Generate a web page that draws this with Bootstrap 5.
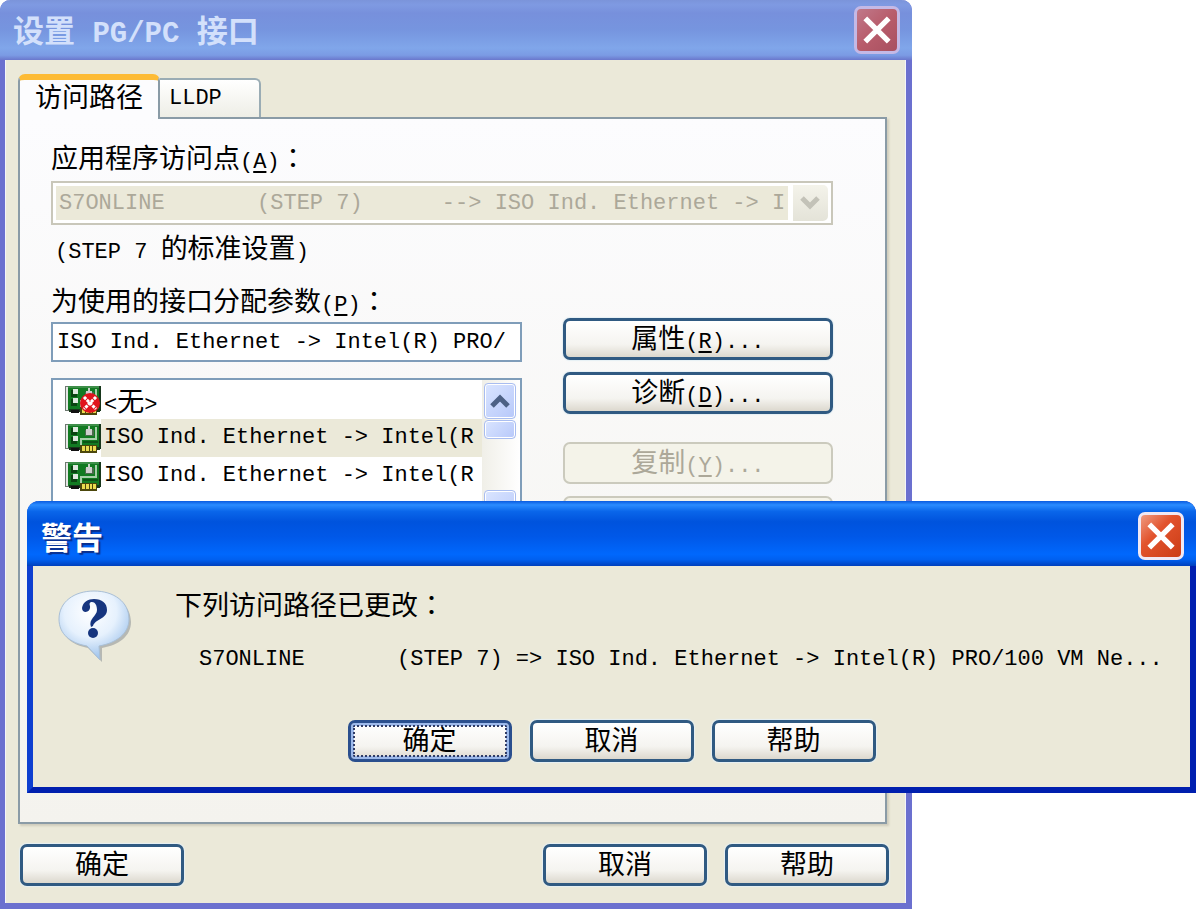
<!DOCTYPE html>
<html lang="zh-CN">
<head>
<meta charset="utf-8">
<meta name="viewport" content="width=device-width, initial-scale=1">
<title>设置 PG/PC 接口</title>
<link href="https://cdn.jsdelivr.net/npm/bootstrap@5.3.0/dist/css/bootstrap.min.css" rel="stylesheet">
<style>
  :root { --face: #ebe9d9; --edge: #8a9ba6; }
  body { background: #fff; color: #000; font: 27px/36px "Noto Sans CJK SC", sans-serif; }
  .mono { font-family: "Liberation Mono", "Noto Sans CJK SC", monospace; font-size: 22px; white-space: pre; }
  span.mono, b.mono { line-height: 1; }
  .mid { font-family: "Noto Sans CJK TC", sans-serif; line-height: 1; }
  u { text-underline-offset: 3px; text-decoration-thickness: 2px; }

  /* windows */
  .settings { width: 76.25%; min-height: 100vh; background: var(--face); border: solid #6b70cf; border-width: 0 6px 6px 5px; border-radius: 10px 10px 0 0; box-shadow: inset 1px 0 #f4f4fa, inset -1px 0 #f4f4fa; }
  .caption { height: 60px; font-size: 31px; font-weight: 700; }
  .caption .mono { font-size: 29px; }
  .caption-idle { margin: 0 -6px 0 -5px; padding: 0 12px 0 13px; color: #d3e0fb; border-radius: 10px 10px 0 0; background: linear-gradient(#7b94da 0, #7f9ae2 8%, #7790dc 22%, #7695df 50%, #80a6ea 80%, #7b9be4 92%, #6a77cc 100%); }
  .caption-live { height: 65px; margin: 0 -6px; padding: 4px 12px 0 14px; color: #fff; text-shadow: 2px 2px 1px #0a2f8c; border-radius: 12px 12px 0 0; background: linear-gradient(#0a5be0 0, #2b8cff 6%, #0a66ea 16%, #0053dd 32%, #0058e8 55%, #0068fd 82%, #0060f0 90%, #0040bc 100%); }
  .alert-window { position: absolute; left: 27px; right: 0; top: 501px; background: var(--face); border: solid #0e3fd0; border-width: 0 6px 6px; border-right-color: #001fb0; border-bottom-color: #001fae; border-radius: 12px 12px 0 0; }
  .btn-close-xp { width: 46px; height: 48px; padding: 0; border: 3px solid #f0e8f4; border-radius: 7px; background: linear-gradient(135deg, #ef9a80, #e2532d 40%, #cb3d16); }
  .btn-close-xp.idle { border-color: #c4b9e6; background: linear-gradient(135deg, #c0798a, #b85c6b 50%, #a85060); }
  .btn-close-xp svg { display: block; margin: auto; }

  /* tabs and sheet */
  .tabs { margin: 14px 13px 0; height: 43px; align-items: flex-end; }
  .tab { border: 2px solid var(--edge); border-bottom: 0; color: #000; padding: 0; text-align: left; }
  .tab-on { width: 142px; height: 45px; margin-bottom: -2px; padding: 0 0 8px 15px; background: #fcfcfe; border-top: 6px solid #fdbb35; border-radius: 7px 7px 0 0; line-height: 31px; z-index: 1; }
  .tab-off { width: 101px; height: 39px; padding-left: 9px; background: linear-gradient(#fff, #eeeee6); border-color: #9aacb4; border-left: 0; border-radius: 0 6px 0 0; }
  .sheet { margin: 0 19px 0 13px; padding: 20px 52px 0 31px; border: 2px solid var(--edge); background: linear-gradient(#fcfcfe, #f4f3ee); box-shadow: 2px 2px 2px #cfccbc; }

  /* controls */
  .field { border: 2px solid #7f9db9; border-radius: 0; background: #fff; color: #000; padding: 0 4px; height: 40px; }
  .combo { height: 44px; margin-top: 6px; border: 2px solid #c9c7ba; background: #fff; padding: 3px; }
  .combo select { appearance: none; width: 100%; height: 100%; border: 0; border-radius: 0; background: var(--face); color: #aca899; opacity: 1; padding: 0 3px; }
  .combo .arrow { width: 40px; flex: none; margin: -1px 0; border-left: 5px solid #fff; background: linear-gradient(#f4f3ea, #e4e3d8); border-radius: 5px; }
  .btn-xp { height: 42px; padding: 0 0 4px; border: 3px solid #305a82; border-radius: 7px; background: linear-gradient(#fff, #f5f4f0 65%, #dcd8ce); color: #000; font-size: 27px; line-height: 32px; box-shadow: 0 0 1px 1px #e6f0f4; }
  .btn-xp:disabled { border: 2px solid #cbcabd; background: #f4f3e9; color: #aca899; opacity: 1; box-shadow: none; }
  .w-btn { width: 164px; }
  .btn-xp.default { border-color: #2a4f8e; box-shadow: inset 0 0 0 3px #9db9ea; position: relative; }
  .btn-xp.default::after { content: ""; position: absolute; inset: 2px; border: 2px dotted #303c66; border-radius: 2px; }
  .btn-row { gap: 18px; }
  .split { gap: 41px; }
  .second-label { padding-top: 17px; }
  .side { width: 270px; gap: 12px; }
  .params { border: 2px solid #7f9db9; background: #fff; height: 172px; overflow: hidden; }
  .params ul { overflow: hidden; min-width: 0; padding: 1px 0 0 12px; }
  .params li { height: 38px; line-height: 38px; }
  .params li span { flex: 1 0 auto; padding-left: 3px; }
  .params li span.mono { line-height: 38px; }
  .params li.picked span { background: var(--face); }
  .scroller { width: 38px; background: linear-gradient(90deg, #f0efe8, #fff); padding: 3px 4px 0 2px; }
  .scroller i { display: block; border: 1px solid #a9bdf0; border-radius: 4px; background: linear-gradient(135deg, #dae5ff, #b7c8fa); box-shadow: inset 0 0 0 1px #fff; }
  .up { height: 36px; } .thumb { height: 19px; margin-top: 1px; } .down { height: 36px; margin-top: 51px; }
  .footer-row { padding: 20px 17px 17px 15px; }
  .notice { padding: 20px 0 0 24px; }
  .notice-text { margin-left: 42px; }
  .notice-buttons { padding: 42px 0 25px; }
</style>
</head>
<body>
<svg width="0" height="0" class="position-absolute">
  <defs>
    <symbol id="nic" viewBox="0 0 36 30">
      <path d="M0 1h5v25H0z" fill="#6d7a70"/><path d="M1 2h2v23H1z" fill="#e6e6e6"/>
      <path d="M3 1h33v24H3z" fill="#127a22"/><path d="M3 1h33v2H3z" fill="#3f8f4a"/>
      <path d="M34 1h2v25h-2zM4 24h31v3H4z" fill="#17361b"/>
      <path d="M6 5h6v7H6zM6 14h6v7H6z" fill="#0b4312"/><path d="M8 4h5v5H8zM8 13h5v5H8z" fill="#dfe8df"/>
      <path d="M20 7h9v6h-9z" fill="#4a6b4d"/><path d="M21 6h6v6h-6z" fill="#cfcfcf"/><path d="M23 3h2v3h-2z" fill="#c8d4c8"/>
      <path d="M16 22v-6h15V4" fill="none" stroke="#a6cfaa" stroke-width="2"/>
      <path d="M18 19h15" stroke="#0d5517" stroke-width="2"/>
      <path d="M6 25h8v3H6z" fill="#111"/>
      <path d="M15 22h17v8H15z" fill="#4c470c"/><path d="M17 23h3v5h-3zM21 23h3v5h-3zM25 23h2v5h-2zM28 23h3v5h-3z" fill="#eadb50"/>
    </symbol>
    <symbol id="cross" viewBox="0 0 30 30"><path d="M4 4 26 26M26 4 4 26" stroke="#fff" stroke-width="5"/></symbol>
  </defs>
</svg>

<main class="settings d-flex flex-column">
  <header class="caption caption-idle d-flex align-items-center justify-content-between">
    <div>设置<span class="mono"> PG/PC </span>接口</div>
    <button class="btn btn-close-xp idle" type="button" aria-label="关闭"><svg width="32" height="32"><use href="#cross"/></svg></button>
  </header>

  <nav class="tabs d-flex" role="tablist">
    <button class="tab tab-on position-relative" role="tab" aria-selected="true" type="button">访问路径</button>
    <button class="tab tab-off mono" role="tab" type="button">LLDP</button>
  </nav>

  <section class="sheet flex-grow-1">
    <label for="point" class="d-block">应用程序访问点<span class="mono">(<u>A</u>)</span><span class="mid" lang="zh-TW">：</span></label>
    <div class="combo d-flex">
      <select id="point" class="mono" disabled><option>S7ONLINE&nbsp;&nbsp;&nbsp;&nbsp;&nbsp;&nbsp;&nbsp;(STEP&nbsp;7)&nbsp;&nbsp;&nbsp;&nbsp;&nbsp;&nbsp;--&gt;&nbsp;ISO&nbsp;Ind.&nbsp;Ethernet&nbsp;-&gt;&nbsp;I</option></select>
      <div class="arrow d-flex align-items-center justify-content-center"><svg width="20" height="14" viewBox="0 0 20 14"><path d="m2 2 8 8 8-8" fill="none" stroke="#c3c2b8" stroke-width="5"/></svg></div>
    </div>
    <div class="ps-1 pt-1"><span class="mono">(STEP 7 </span>的标准设置<span class="mono">)</span></div>
    <label for="param" class="d-block second-label">为使用的接口分配参数<span class="mono">(<u>P</u>)</span><span class="mid" lang="zh-TW">：</span></label>
    <div class="d-flex split">
      <div class="flex-fill overflow-hidden pt-1">
        <input id="param" class="field mono w-100 d-block" value="ISO Ind. Ethernet -&gt; Intel(R) PRO/" readonly>
        <div class="params d-flex mt-3">
          <ul class="list-unstyled mb-0 flex-grow-1" role="listbox">
            <li class="d-flex align-items-center" role="option"><svg class="flex-shrink-0" width="36" height="30" viewBox="0 0 36 30"><use href="#nic" width="36" height="30"/><circle cx="25" cy="18" r="10" fill="#e0141c"/><path d="m19 12 12 12m0-12L19 24" stroke="#fff" stroke-width="3" stroke-dasharray="3 1"/></svg><span><b class="mono fw-normal">&lt;</b>无<b class="mono fw-normal">&gt;</b></span></li>
            <li class="d-flex align-items-center picked" role="option" aria-selected="true"><svg class="flex-shrink-0" width="36" height="30"><use href="#nic" width="36" height="30"/></svg><span class="mono">ISO Ind. Ethernet -&gt; Intel(R</span></li>
            <li class="d-flex align-items-center" role="option"><svg class="flex-shrink-0" width="36" height="30"><use href="#nic" width="36" height="30"/></svg><span class="mono">ISO Ind. Ethernet -&gt; Intel(R</span></li>
          </ul>
          <div class="scroller flex-shrink-0">
            <i class="up d-flex align-items-center justify-content-center"><svg width="22" height="15" viewBox="0 0 22 15"><path d="m3 12 8-8 8 8" fill="none" stroke="#4d6185" stroke-width="5"/></svg></i>
            <i class="thumb"></i>
            <i class="down"></i>
          </div>
        </div>
      </div>
      <div class="side d-flex flex-column flex-shrink-0">
        <button class="btn btn-xp" type="button">属性<span class="mono">(<u>R</u>)...</span></button>
        <button class="btn btn-xp" type="button">诊断<span class="mono">(<u>D</u>)...</span></button>
        <button class="btn btn-xp mt-3" type="button" disabled>复制<span class="mono">(<u>Y</u>)...</span></button>
        <button class="btn btn-xp" type="button" disabled aria-label="删除"></button>
      </div>
    </div>
  </section>

  <footer class="footer-row btn-row d-flex">
    <button class="btn btn-xp w-btn me-auto" type="button">确定</button>
    <button class="btn btn-xp w-btn" type="button">取消</button>
    <button class="btn btn-xp w-btn" type="button">帮助</button>
  </footer>
</main>

<section class="alert-window" role="alertdialog" aria-labelledby="warn">
  <header class="caption caption-live d-flex align-items-center justify-content-between">
    <div id="warn">警告</div>
    <button class="btn btn-close-xp" type="button" aria-label="关闭"><svg width="32" height="32"><use href="#cross"/></svg></button>
  </header>
  <div class="notice d-flex">
    <svg class="flex-shrink-0" width="76" height="80" viewBox="0 0 76 80">
      <defs><radialGradient id="bub" cx=".45" cy=".3" r=".75"><stop offset="0" stop-color="#fff"/><stop offset=".5" stop-color="#e6f1fd"/><stop offset="1" stop-color="#8fb9e8"/></radialGradient></defs>
      <path d="M38 8C18 8 4 19 4 36c0 14 11 23 27 26l14 14v-14c17-3 29-12 29-26C74 19 59 8 38 8z" fill="#8b8f94" opacity=".55"/>
      <path d="M37 5C17 5 2 16 2 33c0 15 11 24 28 27l13 14-1-14c17-3 30-12 30-27C72 16 57 5 37 5z" fill="url(#bub)" stroke="#a9bfd6"/>
      <path d="M25 22c1-6 6-9 12-9 8 0 13 4 13 11 0 9-12 9-14 16l-2 1c-3-8 6-11 6-17 0-5-2-8-5-8-2 0-3 1-2 4 1 7-8 8-8 2z" fill="#16357f"/>
      <circle cx="36" cy="47" r="5" fill="#16357f"/>
    </svg>
    <div class="notice-text">
      <div>下列访问路径已更改<span class="mid" lang="zh-TW">：</span></div>
      <div class="mono ps-4 mt-3 pt-1">S7ONLINE       (STEP 7) =&gt; ISO Ind. Ethernet -&gt; Intel(R) PRO/100 VM Ne...</div>
    </div>
  </div>
  <div class="notice-buttons btn-row d-flex justify-content-center">
    <button class="btn btn-xp default w-btn" type="button">确定</button>
    <button class="btn btn-xp w-btn" type="button">取消</button>
    <button class="btn btn-xp w-btn" type="button">帮助</button>
  </div>
</section>
<script src="https://cdn.jsdelivr.net/npm/bootstrap@5.3.0/dist/js/bootstrap.bundle.min.js"></script>
</body>
</html>
